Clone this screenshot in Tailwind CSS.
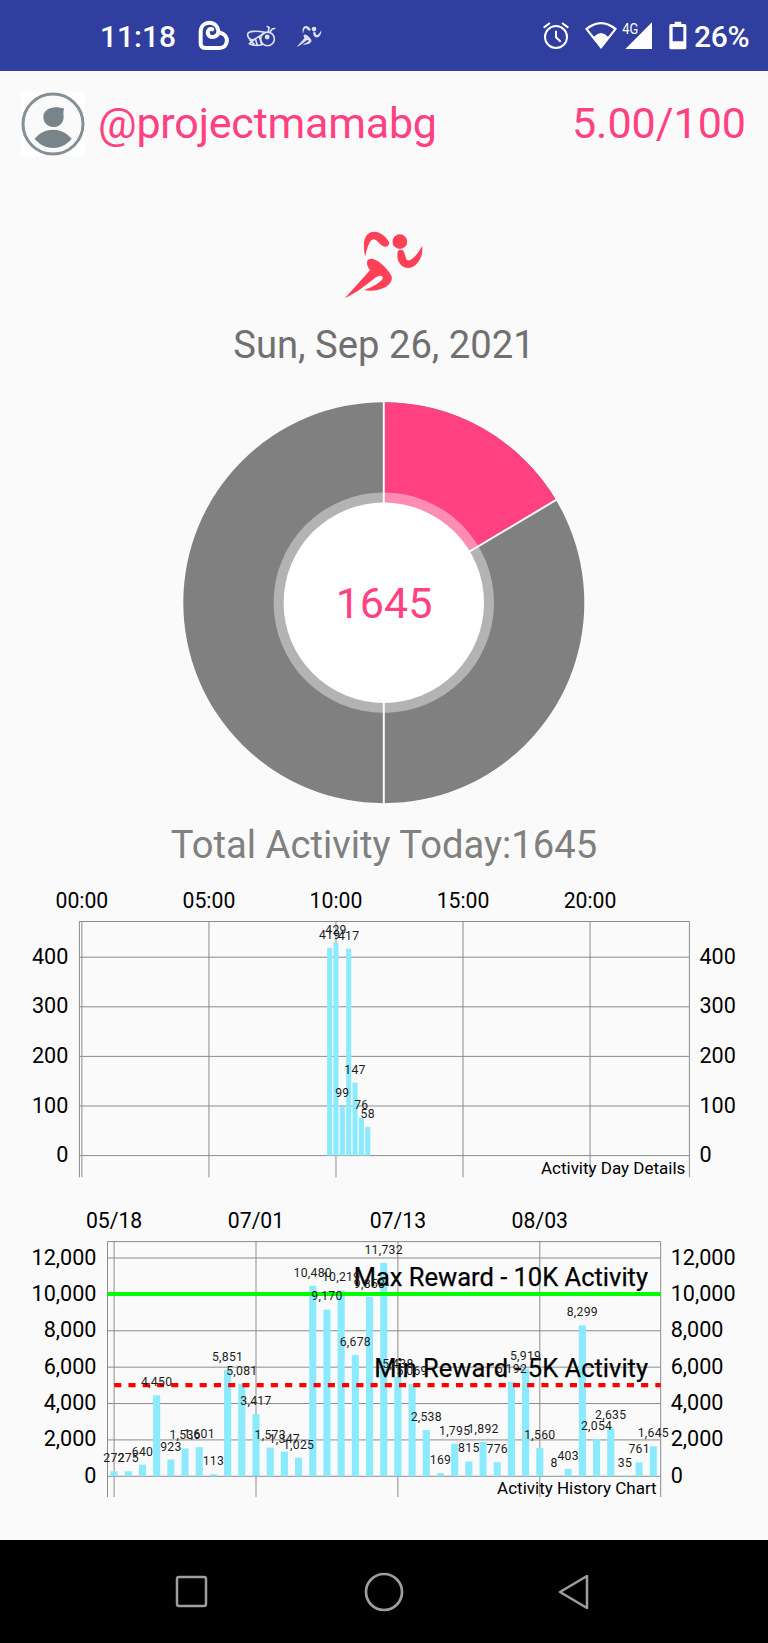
<!DOCTYPE html>
<html lang="en">

<head>
    <meta charset="UTF-8" />
    <meta name="viewport" content="width=device-width, initial-scale=1.0" />
    <title>Activity Tracker</title>
    <script src="https://cdn.jsdelivr.net/npm/@tailwindcss/browser@4"></script>
</head>

<body class="bg-[#fafafa] font-[Roboto,sans-serif] w-[768px] h-[1643px] flex flex-col overflow-hidden">
    <!-- Status bar -->
    <div class="h-[71px] shrink-0 bg-[#303f9f] text-white flex items-center justify-between pl-[100px] pr-[15px] pt-[2px]">
        <div class="flex items-center">
            <span class="w-[98px] text-[30px] font-medium">11:18</span>
            <svg class="w-[32px] h-[32px] mb-[2px]" viewBox="596 60 96 96" fill="none" stroke="white" stroke-width="12" stroke-linecap="round" stroke-linejoin="round">
                <path d="M639 88C628 82 621 98 629 107C641 117 659 107 657 92C652 60 605 60 604 95V130Q604 144 618 144H660C689 144 691 102 661 98" />
            </svg>
            <svg class="w-[30px] h-[24px] ml-[16px] mb-px" viewBox="738 72 92 72" fill="none" stroke="#dfe1f0" stroke-width="5" stroke-linecap="round" stroke-linejoin="round">
                <circle cx="804" cy="117" r="21" />
                <circle cx="803" cy="111" r="5" fill="#dfe1f0" />
                <path d="M796 97C775 92 742 91 743 104C744 118 757 124 767 116C776 111 786 105 796 97M766 117L748 132C760 138 775 138 790 134M767 117L772 134M779 110L786 134M750 121L762 132M806 95L809 82L803 79M812 95L819 86L826 85" />
            </svg>
            <svg class="w-[26px] h-[23px] ml-[20px] mb-px" viewBox="430 60 245 210" fill="#dfe1f0">
                <path d="M496 139C487 99 493 66 522 65C543 65 558 80 568 97C569 108 560 112 550 109C541 105 532 89 521 88C507 91 503 114 496 139Z" />
                <circle cx="600" cy="95" r="22" />
                <path d="M593 128C595 117 610 117 613 127L620 149C632 160 656 129 667 108C672 143 648 174 625 174C603 174 590 154 593 128Z" />
                <path d="M511 180C499 167 497 148 512 146C531 144 565 176 575 198C580 210 568 225 558 231C540 241 512 245 493 240C513 233 538 221 548 207C552 195 539 195 528 202C501 224 472 247 435 265Z" />
            </svg>
        </div>
        <div class="flex items-center">
            <svg class="w-[28px] h-[30px] mb-px" viewBox="474 62 84 90" fill="none" stroke="white" stroke-width="6">
                <circle cx="516" cy="110" r="33" />
                <path d="M516 91V111L530 124M479 82L498 68M553 82L534 68" />
            </svg>
            <svg class="w-[34px] h-[30px] ml-[14px] mb-px" viewBox="600 62 102 90" fill="white">
                <path fill-rule="evenodd" d="M603 85Q651 45 699 85L651 146ZM612 87L630 109Q651 87 672 109L690 87Q651 56 612 87Z" />
            </svg>
            <svg class="w-[33px] h-[30px] ml-[4px] mb-px" viewBox="714 62 99 90" fill="white">
                <path d="M804 66V146H724Z" />
                <text x="715" y="101" font-size="44" textLength="48" lengthAdjust="spacingAndGlyphs">4G</text>
            </svg>
            <svg class="w-[20px] h-[30px] ml-[13px] mb-px" viewBox="852 62 60 90" fill="white">
                <path fill-rule="evenodd" d="M872 64H892V71H902Q907 71 907 76V142Q907 147 902 147H861Q856 147 856 142V76Q856 71 861 71H872ZM866 80V123H898V80Z" />
            </svg>
            <span class="w-[59px] ml-[6px] text-[30px] font-medium tracking-[-0.3px]">26%</span>
        </div>
    </div>

    <!-- User and reward rate -->
    <div class="h-[106px] shrink-0 flex items-center pl-[21px] pr-[22px] text-[#ff4081] text-[43px]">
        <svg class="w-[64px] h-[64px] bg-white" viewBox="0 0 192 192">
            <circle cx="96" cy="96" r="90" fill="#fafafa" stroke="#849095" stroke-width="9" />
            <path fill="#78848a" d="M130 50C126 57 127 63 128 74C128 92 115 105 97 105C80 105 67 92 67 75C67 48 100 39 130 50ZM41 140C70 104 122 104 152 140C122 177 71 177 41 140Z" />
        </svg>
        <span class="ml-[13px] mb-[2px] tracking-[-0.2px]">@projectmamabg</span>
        <span class="ml-auto mb-[2px]">5.00/100</span>
    </div>

    <!-- Today -->
    <div class="h-[223px] shrink-0 flex flex-col items-center pt-[53px]">
        <svg class="w-[82px] h-[70px]" viewBox="430 60 245 210" fill="#ff4057">
            <path d="M496 139C487 99 493 66 522 65C543 65 558 80 568 97C569 108 560 112 550 109C541 105 532 89 521 88C507 91 503 114 496 139Z" />
            <circle cx="600" cy="95" r="22" />
            <path d="M593 128C595 117 610 117 613 127L620 149C632 160 656 129 667 108C672 143 648 174 625 174C603 174 590 154 593 128Z" />
            <path d="M511 180C499 167 497 148 512 146C531 144 565 176 575 198C580 210 568 225 558 231C540 241 512 245 493 240C513 233 538 221 548 207C552 195 539 195 528 202C501 224 472 247 435 265Z" />
        </svg>
        <p class="mt-[19px] h-[52px] leading-[52px] text-[38.2px] text-[#707070]">Sun, Sep 26, 2021</p>
    </div>
    <svg class="w-[768px] h-[419px] shrink-0" viewBox="0 400 768 419">
        <circle cx="383.8" cy="602.7" r="200.5" fill="#808080" />
        <path d="M383.8 602.7V402.2A200.5 200.5 0 0 1 556 500Z" fill="#ff4081" />
        <circle cx="383.8" cy="602.7" r="110.2" fill="white" fill-opacity="0.4" />
        <path d="M383.8 402V804M383.8 602.7L557 499.4" stroke="#fafafa" stroke-width="2" />
        <circle cx="383.8" cy="602.7" r="100.2" fill="white" />
        <text x="384" y="618" font-size="43" fill="#ff4081" text-anchor="middle">1645</text>
    </svg>
    <p class="h-[51px] shrink-0 leading-[52px] text-center text-[38.2px] text-[#808080]">Total Activity Today:1645</p>

    <!-- Charts -->
    <svg id="dayChart" class="w-[768px] h-[320px] shrink-0" viewBox="0 870 768 320"></svg>
    <svg id="historyChart" class="w-[768px] h-[350px] shrink-0" viewBox="0 1190 768 350"></svg>

    <!-- Navigation bar -->
    <div class="h-[103px] shrink-0 bg-black flex items-center justify-between pl-[175px] pr-[178px]">
        <svg class="w-[33px] h-[33px]" viewBox="0 0 33 33" fill="none" stroke="#9e9e9e" stroke-width="2.5">
            <rect x="2" y="2" width="29" height="29" rx="2" />
        </svg>
        <svg class="w-[40px] h-[40px] ml-[2px]" viewBox="0 0 40 40" fill="none" stroke="#9e9e9e" stroke-width="2.7">
            <circle cx="20" cy="20" r="18" />
        </svg>
        <svg class="w-[32px] h-[38px]" viewBox="0 0 32 38" fill="none" stroke="#9e9e9e" stroke-width="2.5" stroke-linejoin="round">
            <path d="M29 3V35L2 19Z" />
        </svg>
    </div>

    <script>
        const dayData = { 39: 419, 40: 429, 41: 99, 42: 417, 43: 147, 44: 76, 45: 58 };
        const historyData = [272, 275, 640, 4450, 923, 1536, 1601, 113, 5851, 5081, 3417, 1573, 1347, 1025,
            10480, 9170, 10219, 6678, 9858, 11732, 5438, 5069, 2538, 169, 1795, 815, 1892, 776, 5192, 5919,
            1560, 8, 403, 8299, 2054, 2635, 35, 761, 1645];

        function line(x1, y1, x2, y2, extra = 'stroke="#8c8c8c" stroke-width="1"') {
            return `<line x1="${x1}" y1="${y1}" x2="${x2}" y2="${y2}" ${extra} />`;
        }

        function label(x, y, text, size, anchor, extra = "") {
            return `<text x="${x}" y="${y}" font-size="${size}" text-anchor="${anchor}" ${extra}>${text}</text>`;
        }

        function drawChart(id, c) {
            let svg = "";
            const yPos = (v) => c.zero - v * c.scale;
            const xPos = (i) => c.first + i * c.step;

            c.yTicks.forEach((v) => {
                svg += line(c.left, yPos(v), c.right, yPos(v));
                svg += label(c.left - 11, yPos(v) + 6.5, v.toLocaleString("en-US"), 21.6, "end");
                svg += label(c.right + 10, yPos(v) + 6.5, v.toLocaleString("en-US"), 21.6, "start");
            });
            c.xTicks.forEach(([i, text]) => {
                svg += line(xPos(i), c.top, xPos(i), c.bottom);
                svg += label(xPos(i), c.top - 14, text, 21.2, "middle");
            });
            svg += line(c.left, c.top, c.right, c.top);
            svg += line(c.left, c.top, c.left, c.bottom);
            svg += line(c.right, c.top, c.right, c.bottom);

            const bars = Object.entries(c.data);
            bars.forEach(([i, v]) => {
                svg += `<rect x="${xPos(+i) - c.barWidth / 2}" y="${yPos(v)}" width="${c.barWidth}" height="${v * c.scale}" fill="#8ceaff" />`;
            });
            svg += c.limits || "";
            bars.forEach(([i, v]) => {
                svg += label(xPos(+i), yPos(v) - 9, v.toLocaleString("en-US"), 12.2, "middle", 'letter-spacing="0.3" fill="#1c1c1c"');
            });
            svg += label(c.right - 4, c.bottom - 3.5, c.title, 17, "end");
            document.getElementById(id).innerHTML = svg;
        }

        drawChart("dayChart", {
            data: dayData, title: "Activity Day Details",
            left: 79.4, right: 689.4, top: 921.5, bottom: 1177.3,
            zero: 1155.6, scale: 0.496, first: 81.9, step: 6.352, barWidth: 5.1,
            yTicks: [0, 100, 200, 300, 400],
            xTicks: [[0, "00:00"], [20, "05:00"], [40, "10:00"], [60, "15:00"], [80, "20:00"]],
        });

        drawChart("historyChart", {
            data: historyData, title: "Activity History Chart",
            left: 107.5, right: 660.7, top: 1241.6, bottom: 1497,
            zero: 1476.3, scale: 0.01819, first: 114.1, step: 14.19, barWidth: 7.1,
            yTicks: [0, 2000, 4000, 6000, 8000, 10000, 12000],
            xTicks: [[0, "05/18"], [10, "07/01"], [20, "07/13"], [30, "08/03"]],
            limits: line(107.5, 1294, 660.7, 1294, 'stroke="#00ff00" stroke-width="4.2"')
                + line(114.2, 1385.2, 660.7, 1385.2, 'stroke="#ff0000" stroke-width="4.2" stroke-dasharray="7.12 7.12"')
                + label(648, 1286, "Max Reward - 10K Activity", 25.5, "end", 'stroke="black" stroke-width="0.25"')
                + label(648, 1377, "Min Reward - 5K Activity", 25.5, "end", 'stroke="black" stroke-width="0.25"'),
        });
    </script>
</body>

</html>
